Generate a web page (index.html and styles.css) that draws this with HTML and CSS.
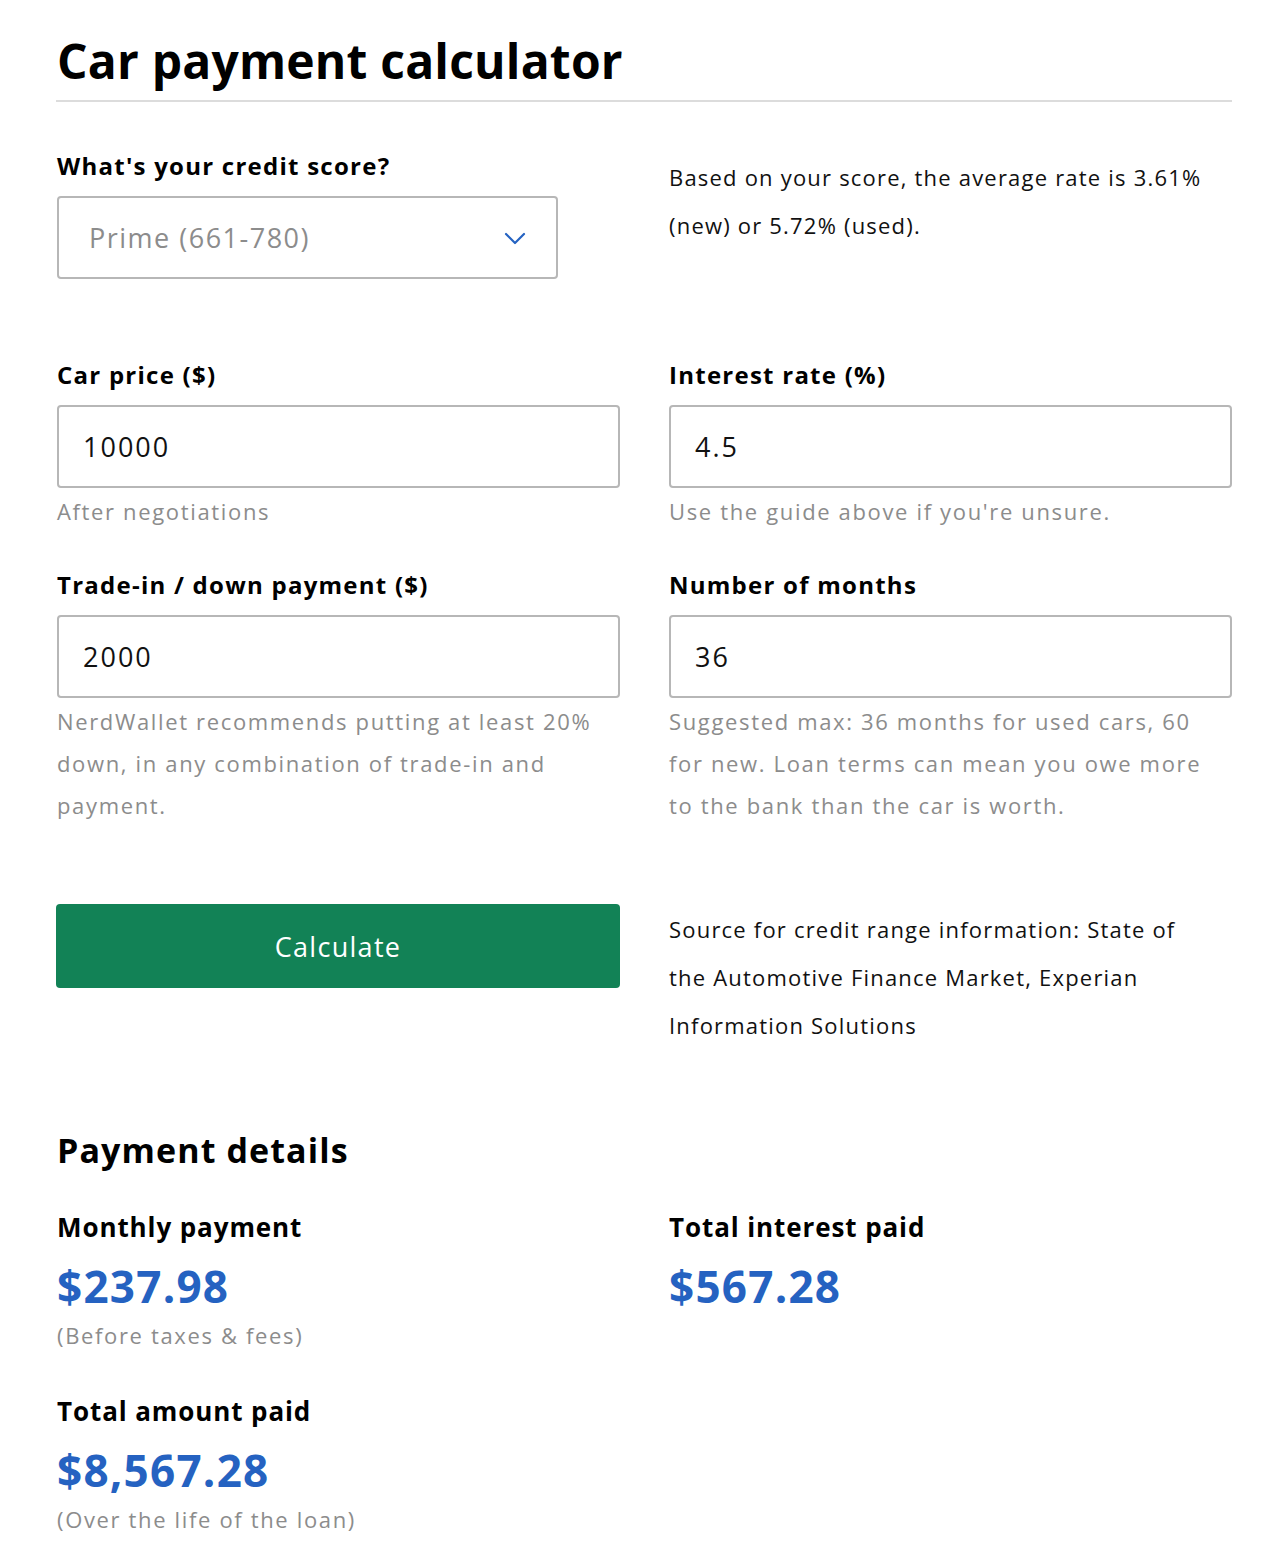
FILE: index.html
```html
<!DOCTYPE html>
<html lang="en">
<head>
<meta charset="utf-8">
<title>Car payment calculator</title>
<link rel="stylesheet" href="styles.css">
</head>
<body>
<main class="calc">
  <h1 class="title">Car payment calculator</h1>

  <section class="row row-credit">
    <div class="col">
      <label class="label">What's your credit score?</label>
      <div class="select">
        <span class="select-text">Prime (661-780)</span>
        <svg class="chev" width="22" height="14" viewBox="0 0 22 14"><polyline points="2,2 11,11 20,2" fill="none" stroke="#2563c2" stroke-width="2.2" stroke-linecap="round" stroke-linejoin="round"/></svg>
      </div>
    </div>
    <div class="col">
      <p class="info">Based on your score, the average rate is 3.61% (new) or 5.72% (used).</p>
    </div>
  </section>

  <section class="row row-fields">
    <div class="col">
      <label class="label">Car price ($)</label>
      <div class="input">10000</div>
      <p class="hint">After negotiations</p>
    </div>
    <div class="col">
      <label class="label">Interest rate (%)</label>
      <div class="input">4.5</div>
      <p class="hint">Use the guide above if you're unsure.</p>
    </div>
  </section>

  <section class="row row-fields2">
    <div class="col">
      <label class="label">Trade-in / down payment ($)</label>
      <div class="input">2000</div>
      <p class="hint">NerdWallet recommends putting at least 20% down, in any combination of trade-in and payment.</p>
    </div>
    <div class="col">
      <label class="label">Number of months</label>
      <div class="input">36</div>
      <p class="hint">Suggested max: 36 months for used cars, 60 for new. Loan terms can mean you owe more to the bank than the car is worth.</p>
    </div>
  </section>

  <section class="row row-action">
    <div class="col">
      <button class="btn">Calculate</button>
    </div>
    <div class="col">
      <p class="info info-source">Source for credit range information: State of the Automotive Finance Market, Experian Information Solutions</p>
    </div>
  </section>

  <section class="results">
    <h2 class="results-title">Payment details</h2>
    <div class="results-grid">
      <div class="result">
        <div class="result-label">Monthly payment</div>
        <div class="result-value">$237.98</div>
        <div class="result-sub">(Before taxes &amp; fees)</div>
      </div>
      <div class="result">
        <div class="result-label">Total interest paid</div>
        <div class="result-value">$567.28</div>
      </div>
      <div class="result">
        <div class="result-label">Total amount paid</div>
        <div class="result-value">$8,567.28</div>
        <div class="result-sub">(Over the life of the loan)</div>
      </div>
    </div>
  </section>
</main>
</body>
</html>
```

FILE: styles.css
```css
* { box-sizing: border-box; }
html, body { margin: 0; padding: 0; background: #fff; }
body {
  font-family: "Open Sans", "DejaVu Sans", sans-serif;
  color: #000;
}
.calc {
  width: 1176px;
  margin: 0 0 0 56px;
  padding-top: 31px;
}
.title {
  margin: 0;
  font-size: 48px;
  line-height: 60px;
  font-weight: 700;
  letter-spacing: 0.2px;
  padding-left: 1px;
  padding-bottom: 9px;
  border-bottom: 2px solid #dcdcdc;
}
.row {
  display: grid;
  grid-template-columns: 564px 564px;
  column-gap: 48px;
}
.col { padding-left: 1px; }
.row-credit { margin-top: 48px; }
.row-fields { margin-top: 80px; }
.row-fields2 { margin-top: 37px; }
.row-action { margin-top: 78px; }
.label {
  display: block;
  font-size: 24px;
  line-height: 32px;
  font-weight: 700;
  letter-spacing: 1.25px;
}
.select {
  margin-top: 14px;
  width: 501px;
  height: 83px;
  border: 2px solid #b7b7b7;
  border-radius: 4px;
  display: flex;
  align-items: center;
  justify-content: space-between;
  padding: 0 30px 0 30px;
}
.select-text {
  font-size: 27px;
  color: #8c8c8c;
  letter-spacing: 1.5px;
}
.chev { display: block; margin-top: 2px; }
.info {
  margin: 0;
  max-width: 545px;
  padding-top: 3px;
  font-size: 22px;
  line-height: 48px;
  color: #111;
  letter-spacing: 1.2px;
}
.info-source { padding-top: 1px; }
.input {
  margin-top: 14px;
  height: 83px;
  border: 2px solid #b7b7b7;
  border-radius: 4px;
  display: flex;
  align-items: center;
  padding-left: 24px;
  font-size: 27px;
  color: #111;
  letter-spacing: 2px;
}
.hint {
  margin: 2px 0 0;
  font-size: 22px;
  line-height: 42px;
  color: #8c8c8c;
  letter-spacing: 1.65px;
}
.btn {
  display: block;
  width: 564px;
  height: 84px;
  margin-left: -1px;
  border: 0;
  border-radius: 4px;
  background: #128256;
  color: #fff;
  font-family: inherit;
  font-size: 27px;
  letter-spacing: 1.3px;
}
.results { margin-top: 79px; padding-left: 1px; }
.results-title {
  margin: 0;
  font-size: 34px;
  line-height: 44px;
  font-weight: 700;
  letter-spacing: 1.1px;
}
.results-grid {
  display: grid;
  grid-template-columns: 612px 564px;
  margin-top: 37px;
  row-gap: 42px;
}
.result-label {
  font-size: 26px;
  line-height: 36px;
  font-weight: 700;
  letter-spacing: 0.9px;
}
.result-value {
  margin-top: 15px;
  font-size: 44px;
  line-height: 52px;
  font-weight: 700;
  color: #2562c1;
  letter-spacing: 1.25px;
}
.result-sub {
  margin-top: 7px;
  font-size: 22px;
  line-height: 32px;
  color: #8c8c8c;
  letter-spacing: 1.65px;
}
```
